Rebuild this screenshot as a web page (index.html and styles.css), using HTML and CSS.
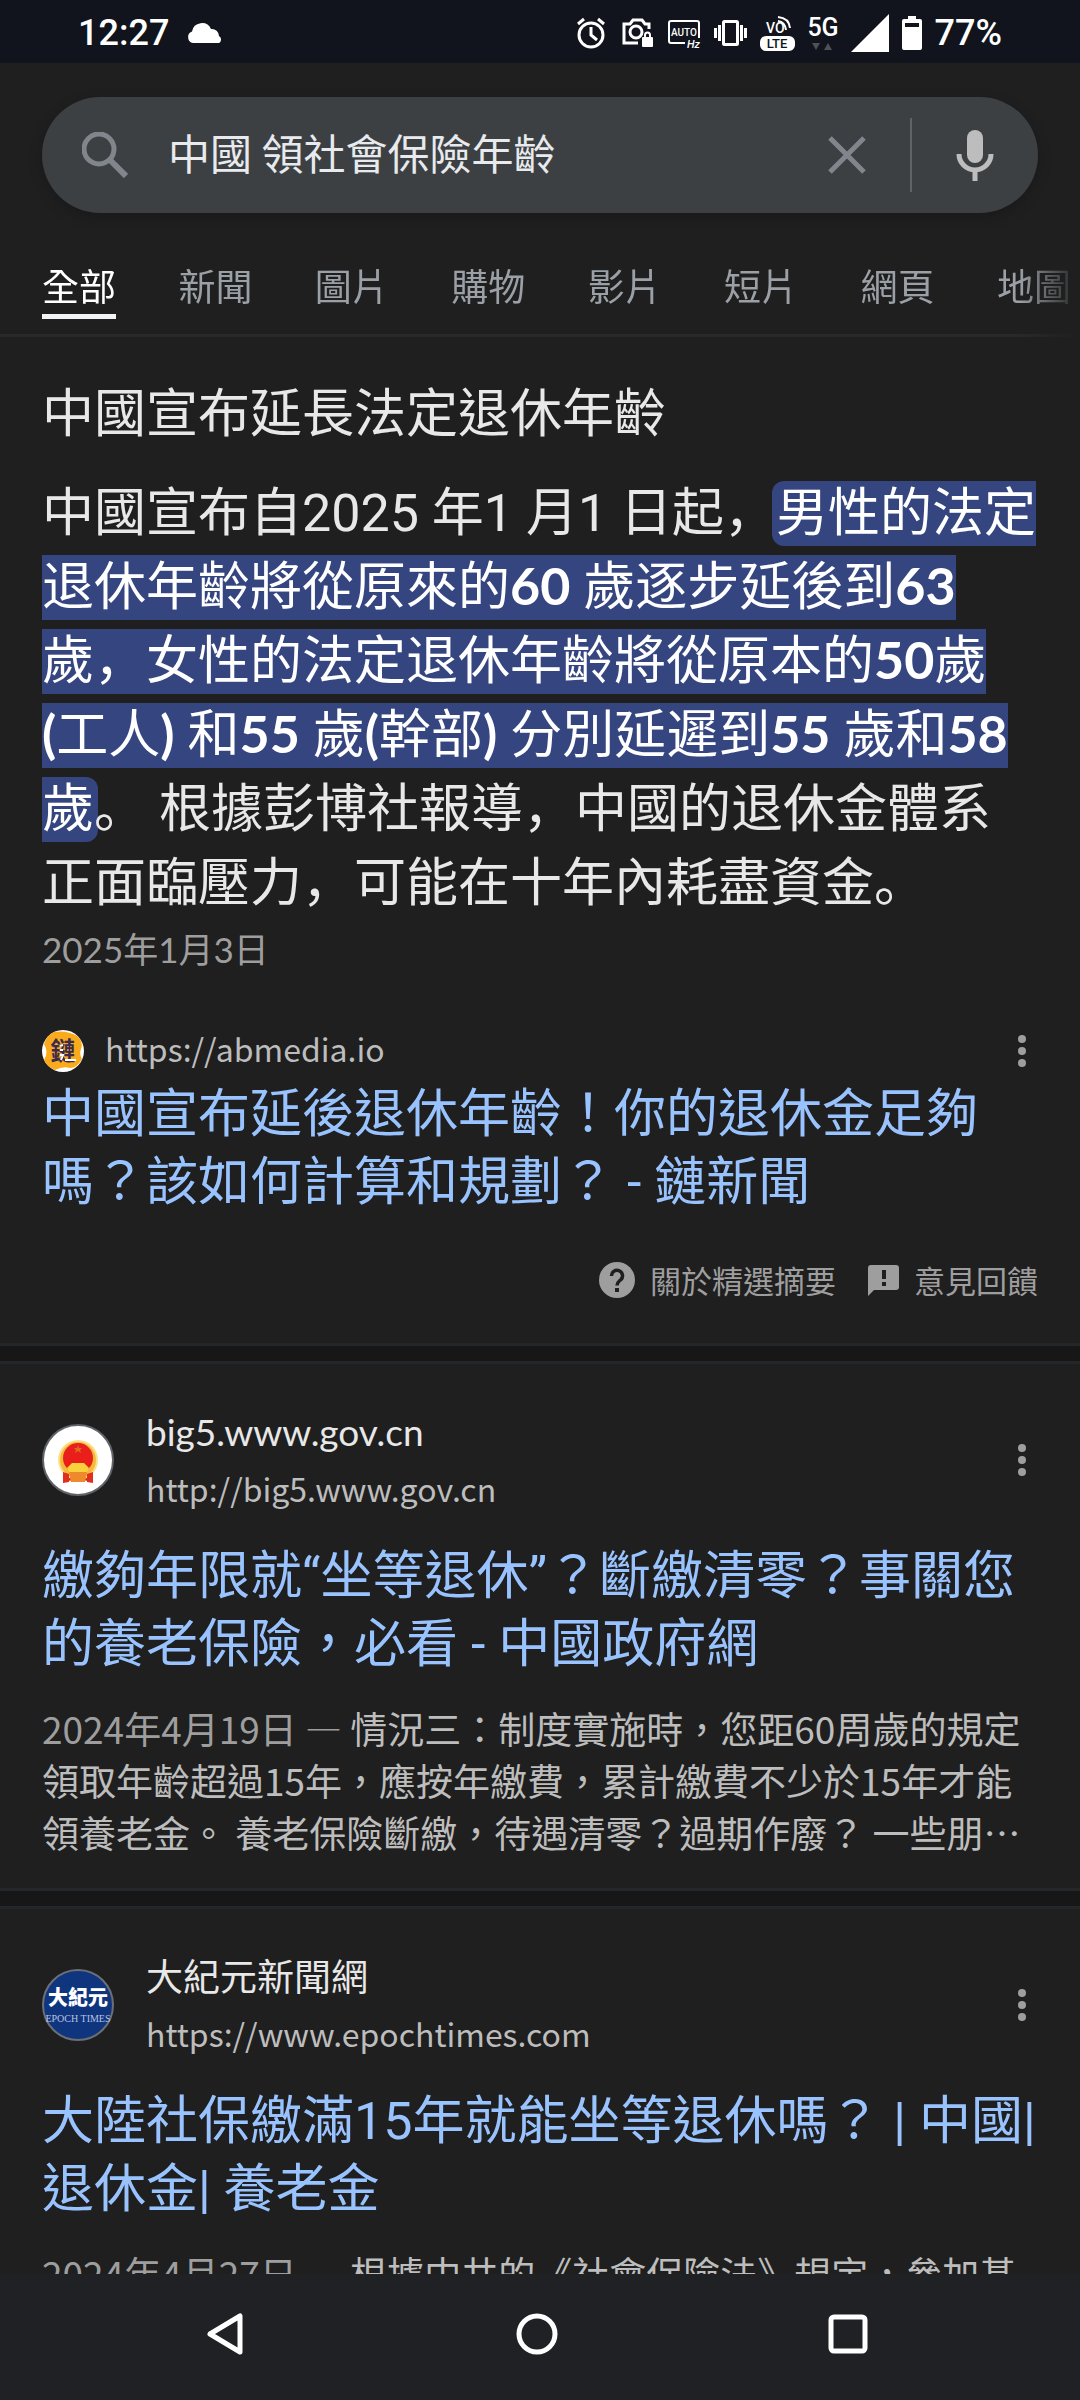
FILE: index.html
```
<!DOCTYPE html>
<html lang="zh-Hant">

<head>
    <meta charset="UTF-8">
    <meta name="viewport" content="width=device-width, initial-scale=1.0">
    <title>中國 領社會保險年齡</title>
    <link rel="stylesheet" href="styles.css">
</head>

<body>
    <div class="status-bar">
        <span class="status-text">12:27</span>
        <svg class="cloud" width="36" height="22" viewBox="0 0 36 22" fill="#fff">
            <path d="M6 21a6 6 0 0 1-1-11.500A10 10 0 0 1 24 7a7 7 0 0 1 8 7a4 4 0 0 1 0 7z" />
        </svg>
        <div class="status-icons">
            <svg width="32" height="32" viewBox="0 0 32 32" fill="none" stroke="#fff" stroke-width="3">
                <circle cx="15" cy="18" r="12" />
                <path d="M15 10v8l6 5M2 7l6-5M28 7l-6-5" />
            </svg>
            <svg width="33" height="32" viewBox="0 0 33 32" fill="none" stroke="#fff" stroke-width="3">
                <path d="M17 26H3V7h6l3-4h9l3 4h4v5" />
                <circle cx="15" cy="15" r="6" />
                <rect x="21" y="20" width="11" height="10" rx="1" fill="#fff" stroke="none" />
                <path d="M24 21v-3a2.500 2.500 0 0 1 5 0v3" stroke-width="2" />
            </svg>
            <svg width="34" height="32" viewBox="0 0 34 32">
                <path d="M18 26H4a2 2 0 0 1-2-2V6a2 2 0 0 1 2-2h26a2 2 0 0 1 2 2v15" fill="none" stroke="#fff" stroke-width="2" />
                <text class="icon-text" x="17" y="19" font-size="10" text-anchor="middle">AUTO</text>
                <text class="icon-text" x="20" y="31" font-size="11" font-style="italic">Hz</text>
            </svg>
            <svg width="33" height="32" viewBox="0 0 33 32" fill="none" stroke="#fff" stroke-width="3">
                <rect x="9.500" y="4.500" width="14" height="23" rx="1" />
                <path d="M5.500 8v16M1.500 11v10M27.500 8v16M31.500 11v10" />
            </svg>
            <svg width="35" height="38" viewBox="0 0 35 38">
                <text class="icon-text" x="6" y="19" font-size="14">VO</text>
                <path d="M18 7q7 1 8 9M18 3q11 1 12 11" fill="none" stroke="#fff" stroke-width="2" />
                <rect y="22" width="35" height="15" rx="6" fill="#fff" />
                <text class="icon-text dark" x="17" y="34" font-size="13" text-anchor="middle">LTE</text>
            </svg>
            <svg width="30" height="38" viewBox="0 0 30 38">
                <text class="icon-text" x="15" y="22" font-size="25" text-anchor="middle">5G</text>
                <path d="M4 29h8l-4 7zM16 36h8l-4-7z" fill="#4d5056" />
            </svg>
            <svg width="38" height="38" viewBox="0 0 38 38" fill="#fff">
                <path d="M38 0v38H0z" />
            </svg>
            <svg width="20" height="36" viewBox="0 0 20 36">
                <path d="M6 1h8v3h4a2 2 0 0 1 2 2v27a2 2 0 0 1-2 2H2a2 2 0 0 1-2-2V6a2 2 0 0 1 2-2h4z" fill="#fff" />
                <path d="M3 8h14v4H3z" fill="#11141c" />
            </svg>
            <span class="status-text">77%</span>
        </div>
    </div>

    <main class="page">
        <form class="search-box">
            <svg width="46" height="46" viewBox="0 0 46 46" fill="none" stroke="#80868b" stroke-width="5">
                <circle cx="17" cy="17" r="15" />
                <path d="M28 28l16 16" stroke-width="6" />
            </svg>
            <input class="search-input" type="text" value="中國 領社會保險年齡" aria-label="搜尋">
            <button class="icon-button" type="reset" aria-label="清除">
                <svg width="38" height="38" viewBox="0 0 38 38" stroke="#80868b" stroke-width="5">
                    <path d="M2 2l34 34M36 2L2 36" />
                </svg>
            </button>
            <span class="separator"></span>
            <button class="icon-button" type="button" aria-label="語音搜尋">
                <svg width="38" height="52" viewBox="0 0 38 52">
                    <rect x="11" y="1" width="16" height="33" rx="8" fill="#bdbdbd" />
                    <path d="M3 25a16 16 0 0 0 32 0M19 41v11" fill="none" stroke="#bdbdbd" stroke-width="5" />
                </svg>
            </button>
        </form>

        <nav class="tabs">
            <a class="tab active" href="#">全部</a>
            <a class="tab" href="#">新聞</a>
            <a class="tab" href="#">圖片</a>
            <a class="tab" href="#">購物</a>
            <a class="tab" href="#">影片</a>
            <a class="tab" href="#">短片</a>
            <a class="tab" href="#">網頁</a>
            <a class="tab" href="#">地圖</a>
        </nav>

        <section class="featured">
            <h2 class="featured-title">中國宣布延長法定退休年齡</h2>
            <p class="featured-text" lang="zh-Hans">中國宣布自2025 年1 月1 日起，<mark>男性的法定退休年齡將從原來的<b>60</b> 歲逐步延後到<b>63</b>歲，女性的法定退休年齡將從原本的<b>50</b>歲<b>(</b>工人<b>)</b> 和<b>55</b> 歲<b>(</b>幹部<b>)</b> 分別延遲到<b>55</b> 歲和<b>58</b>歲</mark>。 根據彭博社報導，中國的退休金體系正面臨壓力，可能在十年內耗盡資金。</p>
            <p class="featured-date">2025年1月3日</p>

            <div class="source-line">
                <svg width="42" height="42" viewBox="0 0 42 42">
                    <circle cx="21" cy="21" r="21" fill="#fff" />
                    <path d="M12 2Q25 0 35 6Q42 12 39 19Q37 24 40 29Q35 38 28 38Q21 36 13 40Q5 37 2 30Q7 22 2 14Q5 5 12 2z" fill="#f9ab1c" />
                    <text x="21" y="30" font-size="25" font-weight="700" fill="#3b2a4e" text-anchor="middle">鏈</text>
                    <path d="M18 16l3-1M18 20h3M18 25h3l-2 5M23 30h11" stroke="#fff" stroke-width="2" fill="none" />
                </svg>
                <span class="url">https://abmedia.io</span>
                <button class="icon-button menu" type="button" aria-label="更多選項">
                    <svg width="8" height="32" viewBox="0 0 8 32" fill="#9e9e9e">
                        <circle cx="4" cy="4" r="4" />
                        <circle cx="4" cy="16" r="4" />
                        <circle cx="4" cy="28" r="4" />
                    </svg>
                </button>
            </div>
            <a class="result-title" href="#">中國宣布延後退休年齡！你的退休金足夠嗎？該如何計算和規劃？ - 鏈新聞</a>

            <div class="featured-footer">
                <a class="footer-link" href="#">
                    <svg width="36" height="36" viewBox="0 0 36 36">
                        <circle cx="18" cy="18" r="18" fill="#9e9e9e" />
                        <path d="M12.500 14a5.500 5.500 0 1 1 9.500 3.500c-2 2-4 2.500-4 6" fill="none" stroke="#1f1f1f" stroke-width="3.500" />
                        <path d="M16 26h4v4h-4z" fill="#1f1f1f" />
                    </svg>
                    關於精選摘要
                </a>
                <a class="footer-link" href="#">
                    <svg width="31" height="31" viewBox="0 0 31 31">
                        <path d="M3 0h25a3 3 0 0 1 3 3v19a3 3 0 0 1-3 3H6l-6 6V3a3 3 0 0 1 3-3z" fill="#9e9e9e" />
                        <path d="M14 5h4v9h-4zM14 17h4v4h-4z" fill="#1f1f1f" />
                    </svg>
                    意見回饋
                </a>
            </div>
        </section>

        <article class="result">
            <div class="result-header">
                <svg width="72" height="72" viewBox="0 0 72 72">
                    <circle cx="36" cy="36" r="35" fill="#fff" stroke="#5f6368" stroke-width="2" />
                    <path d="M21 45h30v13q-15-4-30 0z" fill="#d8251d" />
                    <circle cx="36" cy="36" r="20" fill="#fbe08a" />
                    <circle cx="36" cy="36" r="18" fill="#f5b83a" />
                    <circle cx="36" cy="34" r="15" fill="#ea1f1c" />
                    <path d="M25 44l5-5h12l5 5-3 5H28z" fill="#f9d13c" />
                    <path d="M21 48l6 2v8l-6 1zM51 48l-6 2v8l6 1z" fill="#e0301d" />
                    <path d="M27 48h18l-2 10H29z" fill="#ee8a2c" />
                    <path d="M36 21l1 3h3l-2 2 1 3-3-2-3 2 1-3-2-2h3z" fill="#dd6a24" />
                </svg>
                <div class="site">
                    <span class="site-name">big5.www.gov.cn</span>
                    <span class="url">http://big5.www.gov.cn</span>
                </div>
                <button class="icon-button menu" type="button" aria-label="更多選項">
                    <svg width="8" height="32" viewBox="0 0 8 32" fill="#9e9e9e">
                        <circle cx="4" cy="4" r="4" />
                        <circle cx="4" cy="16" r="4" />
                        <circle cx="4" cy="28" r="4" />
                    </svg>
                </button>
            </div>
            <a class="result-title" href="#">繳夠年限就“坐等退休”？斷繳清零？事關您的養老保險，必看 - 中國政府網</a>
            <p class="snippet"><span class="date">2024年4月19日 — </span>情況三：制度實施時，您距60周歲的規定領取年齡超過15年，應按年繳費，累計繳費不少於15年才能領養老金。 養老保險斷繳，待遇清零？過期作廢？ 一些朋…</p>
        </article>

        <article class="result">
            <div class="result-header">
                <svg width="72" height="72" viewBox="0 0 72 72">
                    <circle cx="36" cy="36" r="35" fill="#10357f" stroke="#6b6f76" stroke-width="2" />
                    <text x="36" y="36" font-size="20" font-weight="900" fill="#fff" text-anchor="middle">大紀元</text>
                    <text class="epoch" x="36" y="53" font-size="10" text-anchor="middle">EPOCH TIMES</text>
                </svg>
                <div class="site">
                    <span class="site-name">大紀元新聞網</span>
                    <span class="url">https://www.epochtimes.com</span>
                </div>
                <button class="icon-button menu" type="button" aria-label="更多選項">
                    <svg width="8" height="32" viewBox="0 0 8 32" fill="#9e9e9e">
                        <circle cx="4" cy="4" r="4" />
                        <circle cx="4" cy="16" r="4" />
                        <circle cx="4" cy="28" r="4" />
                    </svg>
                </button>
            </div>
            <a class="result-title" href="#">大陸社保繳滿15年就能坐等退休嗎？ | 中國| 退休金| 養老金</a>
            <p class="snippet"><span class="date">2024年4月27日 — </span>根據中共的《社會保險法》規定，參加基</p>
        </article>
    </main>

    <div class="nav-bar">
        <button class="icon-button" type="button" aria-label="返回">
            <svg width="44" height="44" viewBox="0 0 44 44" fill="none" stroke="#fff" stroke-width="5" stroke-linejoin="round">
                <path d="M37 4v36L7 22z" />
            </svg>
        </button>
        <button class="icon-button" type="button" aria-label="主畫面">
            <svg width="44" height="44" viewBox="0 0 44 44" fill="none" stroke="#fff" stroke-width="5">
                <circle cx="22" cy="22" r="18" />
            </svg>
        </button>
        <button class="icon-button" type="button" aria-label="最近使用">
            <svg width="44" height="44" viewBox="0 0 44 44" fill="none" stroke="#fff" stroke-width="5">
                <rect x="5" y="5" width="34" height="34" rx="3" />
            </svg>
        </button>
    </div>
</body>

</html>
```
FILE: styles.css
```
* {
    box-sizing: border-box;
}

body {
    margin: 0;
    height: 100vh;
    display: flex;
    flex-direction: column;
    background-color: #1f1f1f;
    color: #e8e8e8;
    font-family: "Noto Sans CJK TC", sans-serif;
    overflow: hidden;
}

svg {
    display: block;
    flex-shrink: 0;
}

a {
    color: inherit;
    text-decoration: none;
}

p,
h2 {
    margin: 0;
    font-weight: 400;
}

/* status bar */
.status-bar {
    flex-shrink: 0;
    display: flex;
    align-items: center;
    height: 63px;
    padding: 2px 78px 0;
    background-color: #11141c;
    color: #fff;
}

.status-text {
    font-family: Roboto, sans-serif;
    font-size: 36px;
    font-weight: 500;
    line-height: 40px;
}

.cloud {
    margin-left: 18px;
}

.status-icons {
    display: flex;
    align-items: center;
    gap: 13px;
    margin-left: auto;
}

.icon-text {
    font-family: Roboto, sans-serif;
    font-weight: 500;
    fill: #fff;
}

.icon-text.dark {
    fill: #11141c;
}

.page {
    flex: 1;
    min-height: 0;
    overflow: hidden;
}

.icon-button {
    display: flex;
    padding: 0;
    border: none;
    background: none;
}

/* search */
.search-box {
    display: flex;
    align-items: center;
    height: 116px;
    margin: 34px 42px 0;
    padding: 0 44px 0 40px;
    border-radius: 58px;
    background-color: #3c4043;
    box-shadow: 0 4px 14px rgba(0, 0, 0, 0.2);
}

.search-input {
    flex: 1;
    min-width: 0;
    margin-left: 40px;
    padding: 0 0 6px;
    border: none;
    outline: none;
    background: none;
    color: #e8eaed;
    font-family: inherit;
    font-size: 42px;
    line-height: 62px;
}

.separator {
    width: 2px;
    height: 74px;
    margin: 0 44px;
    background-color: #5f6368;
}

/* tabs */
.tabs {
    display: flex;
    justify-content: space-between;
    padding: 44px 9px 15px 42px;
    border-bottom: 3px solid #27292b;
    font-size: 37px;
    line-height: 57px;
    color: #9aa0a6;
    white-space: nowrap;
    mask-image: linear-gradient(to left, transparent, #000 60px);
}

.tab {
    border-bottom: 5px solid transparent;
}

.tab.active {
    border-color: #f1f3f4;
    color: #fff;
}

/* featured snippet */
.featured {
    padding: 36px 42px 41px;
    border-bottom: 3px solid #232729;
}

.featured-title {
    font-size: 52px;
    line-height: 74px;
}

.featured-text {
    margin-top: 30px;
    font-family: Roboto, "Noto Sans CJK SC", sans-serif;
    font-size: 52px;
    line-height: 74px;
}

.featured-text mark {
    margin: 0 -4px;
    padding: 2px 4px;
    border-radius: 12px;
    background-color: #35457f;
    color: #fff;
}

.featured-text b {
    font-family: Lato, sans-serif;
    font-weight: 700;
    line-height: 1;
}

.featured-date {
    font-family: Lato, "Noto Sans CJK TC", sans-serif;
    font-size: 35px;
    line-height: 56px;
    color: #9e9e9e;
}

.source-line {
    display: flex;
    align-items: center;
    height: 48px;
    margin: 50px 0 6px;
}

.source-line .url {
    margin-left: 21px;
    padding-bottom: 6px;
}

.url {
    font-size: 32px;
    line-height: 52px;
    color: #bdbdbd;
}

.menu {
    margin-left: auto;
    padding: 0 12px;
}

.result-title {
    display: block;
    font-family: Roboto, "Noto Sans CJK TC", sans-serif;
    font-size: 52px;
    line-height: 68px;
    color: #99c3ff;
}

.featured-footer {
    display: flex;
    justify-content: flex-end;
    gap: 32px;
    margin-top: 41px;
}

.footer-link {
    display: flex;
    align-items: center;
    gap: 15px;
    font-size: 31px;
    line-height: 44px;
    color: #9e9e9e;
}

/* results */
.result {
    margin-top: 15px;
    padding: 46px 42px 30px;
    border-top: 3px solid #232729;
    border-bottom: 3px solid #232729;
    box-shadow: 0 -15px #171717;
}

.result-header {
    display: flex;
    align-items: center;
    height: 100px;
}

.site {
    display: flex;
    flex-direction: column;
    gap: 4px;
    margin-left: 32px;
}

.site-name {
    font-family: Lato, "Noto Sans CJK TC", sans-serif;
    font-size: 37px;
    line-height: 52px;
}

.result .result-title {
    margin-top: 33px;
}

.epoch {
    font-family: "Liberation Serif", serif;
    fill: #b8c4e0;
}

.snippet {
    margin-top: 23px;
    font-size: 37px;
    line-height: 52px;
    color: #bdbdbd;
}

.date {
    color: #9e9e9e;
}

/* system navigation */
.nav-bar {
    flex-shrink: 0;
    display: flex;
    justify-content: space-between;
    align-items: center;
    height: 126px;
    padding: 0 210px 6px 203px;
    background-color: #202124;
}
```
